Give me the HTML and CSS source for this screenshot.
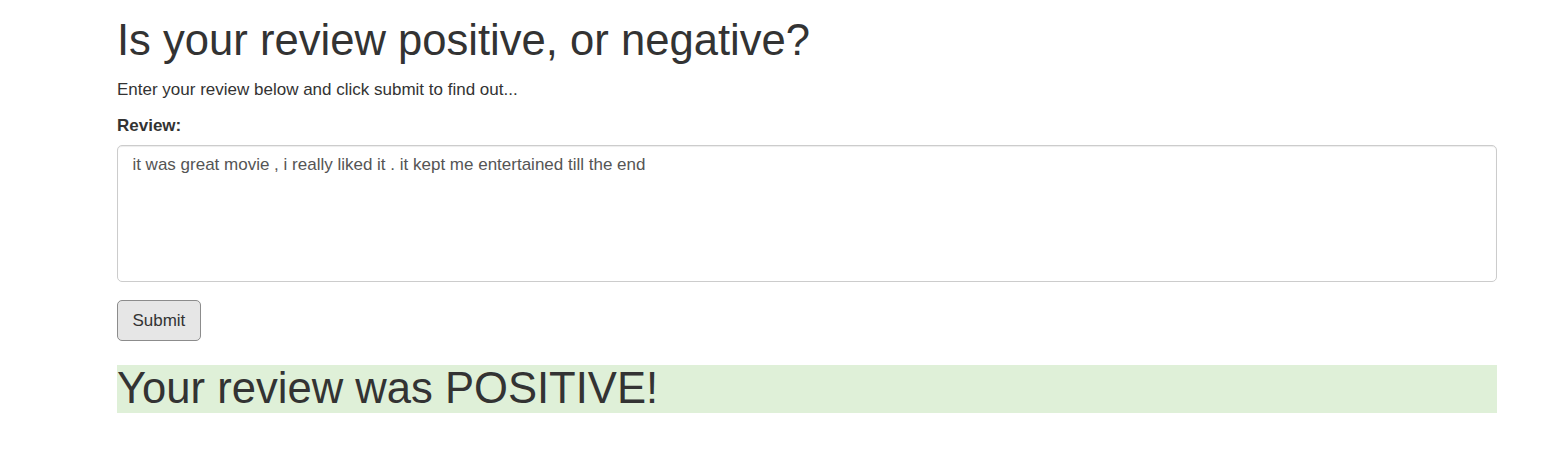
FILE: index.html
```html
<!DOCTYPE html>
<html lang="en">
<head>
<meta charset="utf-8">
<title>Review sentiment</title>
<link rel="stylesheet" href="styles.css">
</head>
<body>
<div class="container">
  <h1 class="title">Is your review positive, or negative?</h1>
  <p class="intro">Enter your review below and click submit to find out...</p>
  <form class="review-form">
    <div class="form-group">
      <label class="field-label" for="review">Review:</label>
      <textarea id="review" class="form-control" rows="5">it was great movie , i really liked it . it kept me entertained till the end</textarea>
    </div>
    <button type="button" class="btn">Submit</button>
  </form>
  <h1 class="result">Your review was POSITIVE!</h1>
</div>
</body>
</html>
```
FILE: styles.css
```css
html, body {
  margin: 0;
  padding: 0;
  background: #fff;
}
body {
  font-family: "Liberation Sans", Arial, Helvetica, sans-serif;
  font-size: 17px;
  line-height: 24px;
  color: #333;
}
.container {
  width: 1380px;
  margin-left: 117px;
}
.title,
.result {
  font-size: 43.6px;
  line-height: 47.5px;
  font-weight: 400;
  color: #333;
}
.title {
  margin: 17px 0 13px;
}
.intro {
  margin: 0 0 12px;
}
.review-form {
  margin: 0;
}
.form-group {
  margin-bottom: 18px;
}
.field-label {
  display: block;
  font-weight: 700;
  margin-bottom: 7.2px;
}
.form-control {
  display: block;
  box-sizing: border-box;
  width: 100%;
  height: 137.6px;
  margin: 0;
  padding: 7.2px 14.4px;
  border: 1px solid #ccc;
  border-radius: 5px;
  box-shadow: inset 0 1px 1px rgba(0, 0, 0, 0.075);
  font-family: inherit;
  font-size: 17px;
  line-height: 24px;
  color: #555;
  background: #fff;
  resize: none;
  outline: none;
}
.btn {
  display: block;
  box-sizing: border-box;
  height: 40.8px;
  padding: 7.2px 14.4px;
  margin: 0;
  border: 1px solid #8c8c8c;
  border-radius: 5px;
  background: #e6e6e6;
  font-family: inherit;
  font-size: 17px;
  line-height: 24px;
  color: #333;
}
.result {
  margin: 24px 0 0;
  background: #dff0d8;
}
```
